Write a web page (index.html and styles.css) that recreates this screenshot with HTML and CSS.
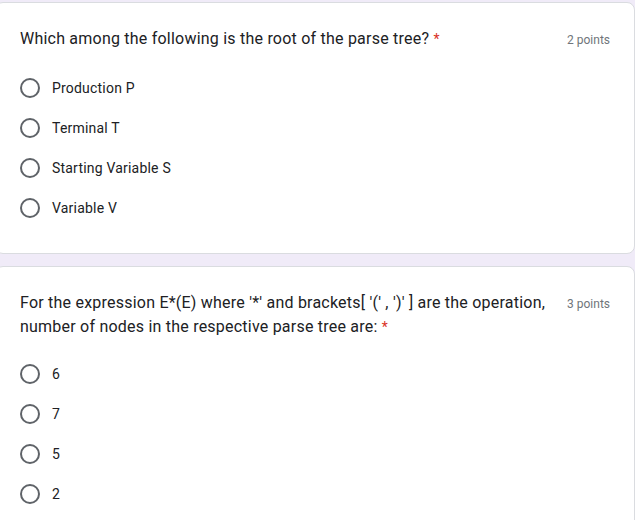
FILE: index.html
```html
<!DOCTYPE html>
<html lang="en">
<head>
<meta charset="utf-8">
<title>Quiz</title>
<link rel="stylesheet" href="styles.css">
</head>
<body>
<main class="form">
  <section class="card">
    <div class="q-head">
      <div class="q-title">Which among the following is the root of the parse tree? <span class="req">*</span></div>
      <div class="q-points">2 points</div>
    </div>
    <div class="options options-1">
      <label class="opt"><span class="radio"></span><span class="opt-text">Production P</span></label>
      <label class="opt"><span class="radio"></span><span class="opt-text">Terminal T</span></label>
      <label class="opt"><span class="radio"></span><span class="opt-text">Starting Variable S</span></label>
      <label class="opt"><span class="radio"></span><span class="opt-text">Variable V</span></label>
    </div>
  </section>
  <section class="card card-last">
    <div class="q-head">
      <div class="q-title">For the expression E*(E) where '*' and brackets[ '(' , ')' ] are the operation, number of nodes in the respective parse tree are: <span class="req">*</span></div>
      <div class="q-points">3 points</div>
    </div>
    <div class="options options-2">
      <label class="opt"><span class="radio"></span><span class="opt-text">6</span></label>
      <label class="opt"><span class="radio"></span><span class="opt-text">7</span></label>
      <label class="opt"><span class="radio"></span><span class="opt-text">5</span></label>
      <label class="opt"><span class="radio"></span><span class="opt-text">2</span></label>
    </div>
  </section>
</main>
</body>
</html>
```

FILE: styles.css
```css
html, body {
  margin: 0;
  padding: 0;
  background: #f0ebf8;
  overflow: hidden;
}
body {
  font-family: Roboto, "Liberation Sans", Arial, sans-serif;
  color: #202124;
  height: 520px;
}
.form {
  padding-top: 2px;
  display: flex;
  flex-direction: column;
  gap: 12px;
  margin-left: -5px;
  width: 640px;
  height: 518px;
  overflow: hidden;
}
.card {
  flex: none;
  background: #fff;
  border: 1px solid #dadce0;
  border-radius: 8px;
  padding: 24px 24px 25px;
}
.card-last {
  height: 260px;
}
.q-head {
  display: flex;
  align-items: flex-start;
  justify-content: space-between;
}
.q-title {
  font-size: 16px;
  line-height: 24px;
  letter-spacing: 0.22px;
  color: #202124;
  flex: 0 1 530px;
}
.req {
  color: #d93025;
  font-size: 14px;
}
.q-points {
  font-size: 12px;
  line-height: 24px;
  color: #70757a;
  white-space: nowrap;
  padding-top: 1px;
}
.options {
  display: flex;
  flex-direction: column;
}
.options-1 {
  margin-top: 16px;
}
.options-2 {
  margin-top: 15px;
}
.opt {
  display: flex;
  align-items: center;
  height: 40px;
  gap: 12px;
}
.radio {
  box-sizing: border-box;
  width: 20px;
  height: 20px;
  border: 2px solid #5f6368;
  border-radius: 50%;
  flex: none;
}
.opt-text {
  font-size: 14px;
  letter-spacing: 0.2px;
  color: #202124;
}
```
